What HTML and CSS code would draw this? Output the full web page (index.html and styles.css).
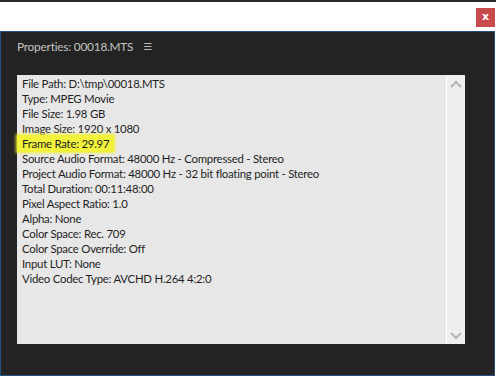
FILE: index.html
```html
<!DOCTYPE html>
<html>
<head>
	<title>Properties: 00018.MTS</title>
	<meta charset="utf-8">
	<link rel="stylesheet" href="styles.css">
</head>
<body>

<div class="topbar">
	<span class="close">x</span>
</div>

<div class="panel">
	<div class="panel-title">
		<span>Properties: 00018.MTS</span>
		<span class="menu">&#9776;</span>
	</div>
	<div class="props">
		<div class="props-list">
			<div>File Path: D:\tmp\00018.MTS</div>
			<div>Type: MPEG Movie</div>
			<div>File Size: 1.98 GB</div>
			<div>Image Size: 1920 x 1080</div>
			<div class="mark"><span>Frame Rate: 29.97</span></div>
			<div>Source Audio Format: 48000 Hz - Compressed - Stereo</div>
			<div>Project Audio Format: 48000 Hz - 32 bit floating point - Stereo</div>
			<div>Total Duration: 00:11:48:00</div>
			<div>Pixel Aspect Ratio: 1.0</div>
			<div>Alpha: None</div>
			<div>Color Space: Rec. 709</div>
			<div>Color Space Override: Off</div>
			<div>Input LUT: None</div>
			<div>Video Codec Type: AVCHD H.264 4:2:0</div>
		</div>
		<div class="scrollbar">
			<svg width="12" height="8" viewBox="0 0 12 8"><path d="M1 7 L6 2 L11 7" fill="none" stroke="#b4b4b4" stroke-width="2"/></svg>
			<svg width="12" height="8" viewBox="0 0 12 8"><path d="M1 1 L6 6 L11 1" fill="none" stroke="#b4b4b4" stroke-width="2"/></svg>
		</div>
	</div>
</div>

</body>
</html>
```

FILE: styles.css
```css
body {
	margin: 0;
	background: #fff;
	font-family: Lato, sans-serif;
}
.topbar {
	height: 29px;
	border-top: 2px solid #2a2a2a;
	display: flex;
	justify-content: flex-end;
	align-items: flex-start;
}
.close {
	margin: 6px 1px 0 0;
	width: 19px;
	height: 19px;
	background: #c94a4d;
	color: #fff;
	font: bold 11px/17px "DejaVu Sans", sans-serif;
	text-align: center;
}
.panel {
	width: 493px;
	height: 343px;
	background: #232323;
	border: 1px solid #24517f;
}
.panel-title {
	display: flex;
	align-items: center;
	gap: 10px;
	height: 29px;
	padding: 0 0 0 16px;
	color: #c4c4c4;
	font-size: 11.8px;
	letter-spacing: -0.2px;
}
.menu {
	font-family: "DejaVu Sans", sans-serif;
	font-size: 10px;
	color: #bbb;
}
.props {
	display: flex;
	margin: 14px 0 0 16px;
	width: 448px;
	height: 269px;
	background: #e7e7e7;
}
.props-list {
	flex: 1;
	padding: 1px 5px 0;
	border-right: 1px solid #fff;
	color: #1f1f1f;
	font-size: 11.4px;
	letter-spacing: -0.25px;
	line-height: 15px;
}
.mark span {
	display: inline-block;
	margin-left: -5px;
	padding: 1px 5px 1px 5px;
	background: #f2f23c;
	box-shadow: 0 0 3px 1px #f2f23c;
}
.mark {
	margin: -1px 0;
}
.scrollbar {
	width: 18px;
	background: #efefef;
	display: flex;
	flex-direction: column;
	justify-content: space-between;
	align-items: center;
	padding: 5px 0 4px;
}
```
